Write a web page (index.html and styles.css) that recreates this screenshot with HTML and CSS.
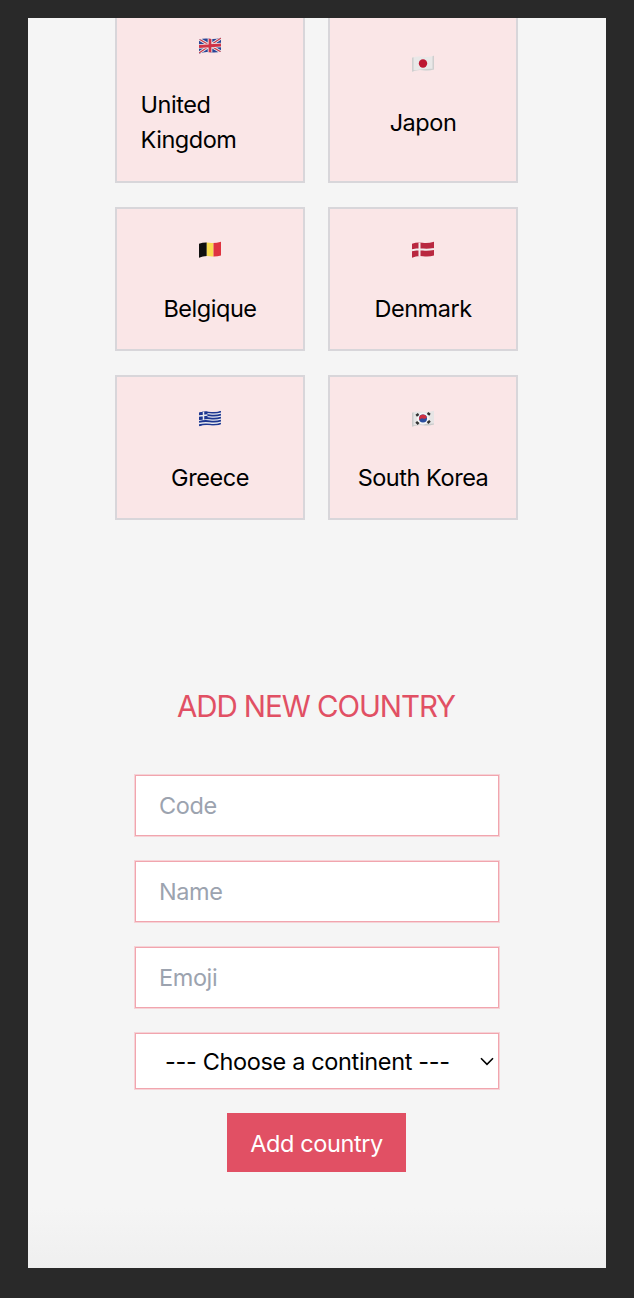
FILE: index.html
```html
<!DOCTYPE html>
<html lang="en">
<head>
<meta charset="utf-8">
<title>Countries</title>
<link rel="stylesheet" href="styles.css">
</head>
<body>
<svg class="defs" aria-hidden="true"><defs>
  <clipPath id="wave"><path d="M0 2.800Q5 1 10.500 1.800T22 .8V14.400Q17 16 11 15.200T0 16.700Z"/></clipPath>
</defs></svg>
<main class="panel">
  <section class="grid">
    <article class="card tall">
      <svg class="flag" viewBox="0 0 22 18"><g clip-path="url(#wave)"><path fill="#294596" d="M0 0h22v18H0z"/><path stroke="#eee" stroke-width="3" d="M0 2L22 15M0 16L22 1"/><path stroke="#c83b4b" stroke-width="1.200" d="M0 2L22 15M0 16L22 1"/><path stroke="#eee" stroke-width="4.600" d="M11 0v18M0 9.500L22 8"/><path stroke="#cf3347" stroke-width="2.800" d="M11 0v18M0 9.500L22 8"/></g></svg>
      <p class="name">United Kingdom</p>
    </article>
    <article class="card tall">
      <svg class="flag" viewBox="0 0 22 18"><g clip-path="url(#wave)"><path fill="#e9e8e8" d="M0 0h22v18H0z"/><path fill="#cfcfcf" d="M0 0h1.600v18H0zM20.500 0H22v18h-1.500zM0 15.500L11 14.200L22 13.600V18H0z"/><circle cx="11" cy="8.500" r="4.200" fill="#bd1732"/></g></svg>
      <p class="name">Japon</p>
    </article>
    <article class="card">
      <svg class="flag" viewBox="0 0 22 18"><g clip-path="url(#wave)"><path fill="#101010" d="M0 0h7.800v18H0z"/><path fill="#f8dc50" d="M7.800 0h6.700v18H7.800z"/><path fill="#df3340" d="M14.500 0H22v18h-7.500z"/></g></svg>
      <p class="name">Belgique</p>
    </article>
    <article class="card">
      <svg class="flag" viewBox="0 0 22 18"><g clip-path="url(#wave)"><path fill="#b92840" d="M0 0h22v18H0z"/><path stroke="#f2eded" stroke-width="2" fill="none" d="M7.500 0v18M0 9.300Q6 8 11 8.500T22 8"/></g></svg>
      <p class="name">Denmark</p>
    </article>
    <article class="card">
      <svg class="flag" viewBox="0 0 22 18"><g clip-path="url(#wave)"><path fill="#e8e9ef" d="M0 0h22v18H0z"/><path stroke="#1d3690" stroke-width="1.800" fill="none" d="M0 3Q5 1.500 11 2.300T22 1.500M0 6Q5 4.500 11 5.300T22 4.500M0 9Q5 7.500 11 8.300T22 7.500M0 12Q5 10.500 11 11.300T22 10.500M0 15.300Q5 13.800 11 14.600T22 13.500"/><path fill="#1d3690" d="M0 1h8.500v8L0 10z"/><path stroke="#e8e9ef" stroke-width="1.500" d="M4.500 1v9M0 6L8.500 5"/></g></svg>
      <p class="name">Greece</p>
    </article>
    <article class="card">
      <svg class="flag" viewBox="0 0 22 18"><g clip-path="url(#wave)"><path fill="#e6e5e5" d="M0 0h22v18H0z"/><path fill="#cbcbcb" d="M0 0h1.500v18H0zM0 15.500L11 14.200L22 13.600V18H0z"/><circle cx="11" cy="8.500" r="6" fill="#f5f5f5"/><circle cx="11" cy="8.500" r="4" fill="#2c4f9f"/><path fill="#d12e40" d="M7.400 10.200A4 4 0 1 1 14.900 7.500Q13 9.500 11 8.500T7.400 10.200Z"/><path stroke="#333" stroke-width="2.500" d="M4.200 5.700L6.600 3.900M15.500 3L18 4.700M4.200 11.800L6.600 14M15.500 13L18 10.900"/></g></svg>
      <p class="name">South Korea</p>
    </article>
  </section>
  <h2 class="title">ADD NEW COUNTRY</h2>
  <form class="form">
    <input class="field" type="text" placeholder="Code">
    <input class="field" type="text" placeholder="Name">
    <input class="field" type="text" placeholder="Emoji">
    <div class="field choice">
      <span class="choice-label">--- Choose a continent ---</span>
      <svg class="chevron" viewBox="0 0 14 9"><path d="M1 1.200L7 7.300L13 1.200" fill="none" stroke="#000" stroke-width="1.600"/></svg>
    </div>
    <button class="submit" type="button">Add country</button>
  </form>
</main>
</body>
</html>
```
FILE: styles.css
```css
* { box-sizing: border-box; }
body {
  margin: 0;
  height: 1298px;
  padding: 18px 28px 30px;
  overflow: hidden;
  background: #292929;
  font-family: Inter, "Liberation Sans", sans-serif;
  font-size: 23.5px;
  line-height: 35px;
  color: #000;
}
.defs { display: block; width: 0; height: 0; }
.panel {
  height: 1250px;
  display: flex;
  flex-direction: column;
  align-items: center;
  overflow: hidden;
  background: linear-gradient(#f5f5f5 0, #f5f5f5 1190px, #efefef 1250px);
}
.grid {
  display: grid;
  grid-template-columns: 190px 190px;
  grid-template-rows: 181px 144px 145px;
  gap: 24px 23px;
  margin: -16px 1px 0 0;
  padding-right: 1px;
  flex: none;
}
.card {
  display: flex;
  flex-direction: column;
  align-items: center;
  justify-content: center;
  gap: 32px;
  padding: 9px 23px 0 24px;
  border: 2px solid #d8d6da;
  background: #fae6e7;
}
.flag { width: 22px; height: 18px; flex: none; }
.name { margin: 0; letter-spacing: -0.46px; }
.title {
  margin: 168px 2px 0 0;
  font-size: 29.5px;
  font-weight: 400;
  line-height: 36px;
  letter-spacing: -1.07px;
  color: #e15064;
}
.form {
  display: flex;
  flex-direction: column;
  align-items: center;
  margin-top: 51px;
  gap: 25px;
}
.field {
  width: 364px;
  height: 61px;
  padding: 0 23px;
  border: 1px solid #f1a5ae;
  border-radius: 0;
  box-shadow: 0 0 0 1px #f6d3d7;
  background: #fff;
  font: inherit;
  letter-spacing: -0.4px;
  outline: none;
}
.field::placeholder { color: #9ca3af; opacity: 1; }
.choice {
  display: flex;
  align-items: center;
  justify-content: space-between;
  height: 56px;
  padding: 0 4px 0 29px;
  letter-spacing: -0.35px;
}
.choice-label { white-space: nowrap; }
.chevron { width: 14px; height: 9px; }
.submit {
  width: 179px;
  height: 59px;
  margin: -1px 1px 0 0;
  padding: 1px 0 0;
  border: 0;
  background: #e15064;
  color: #fff;
  font: inherit;
  letter-spacing: -0.4px;
}
```
